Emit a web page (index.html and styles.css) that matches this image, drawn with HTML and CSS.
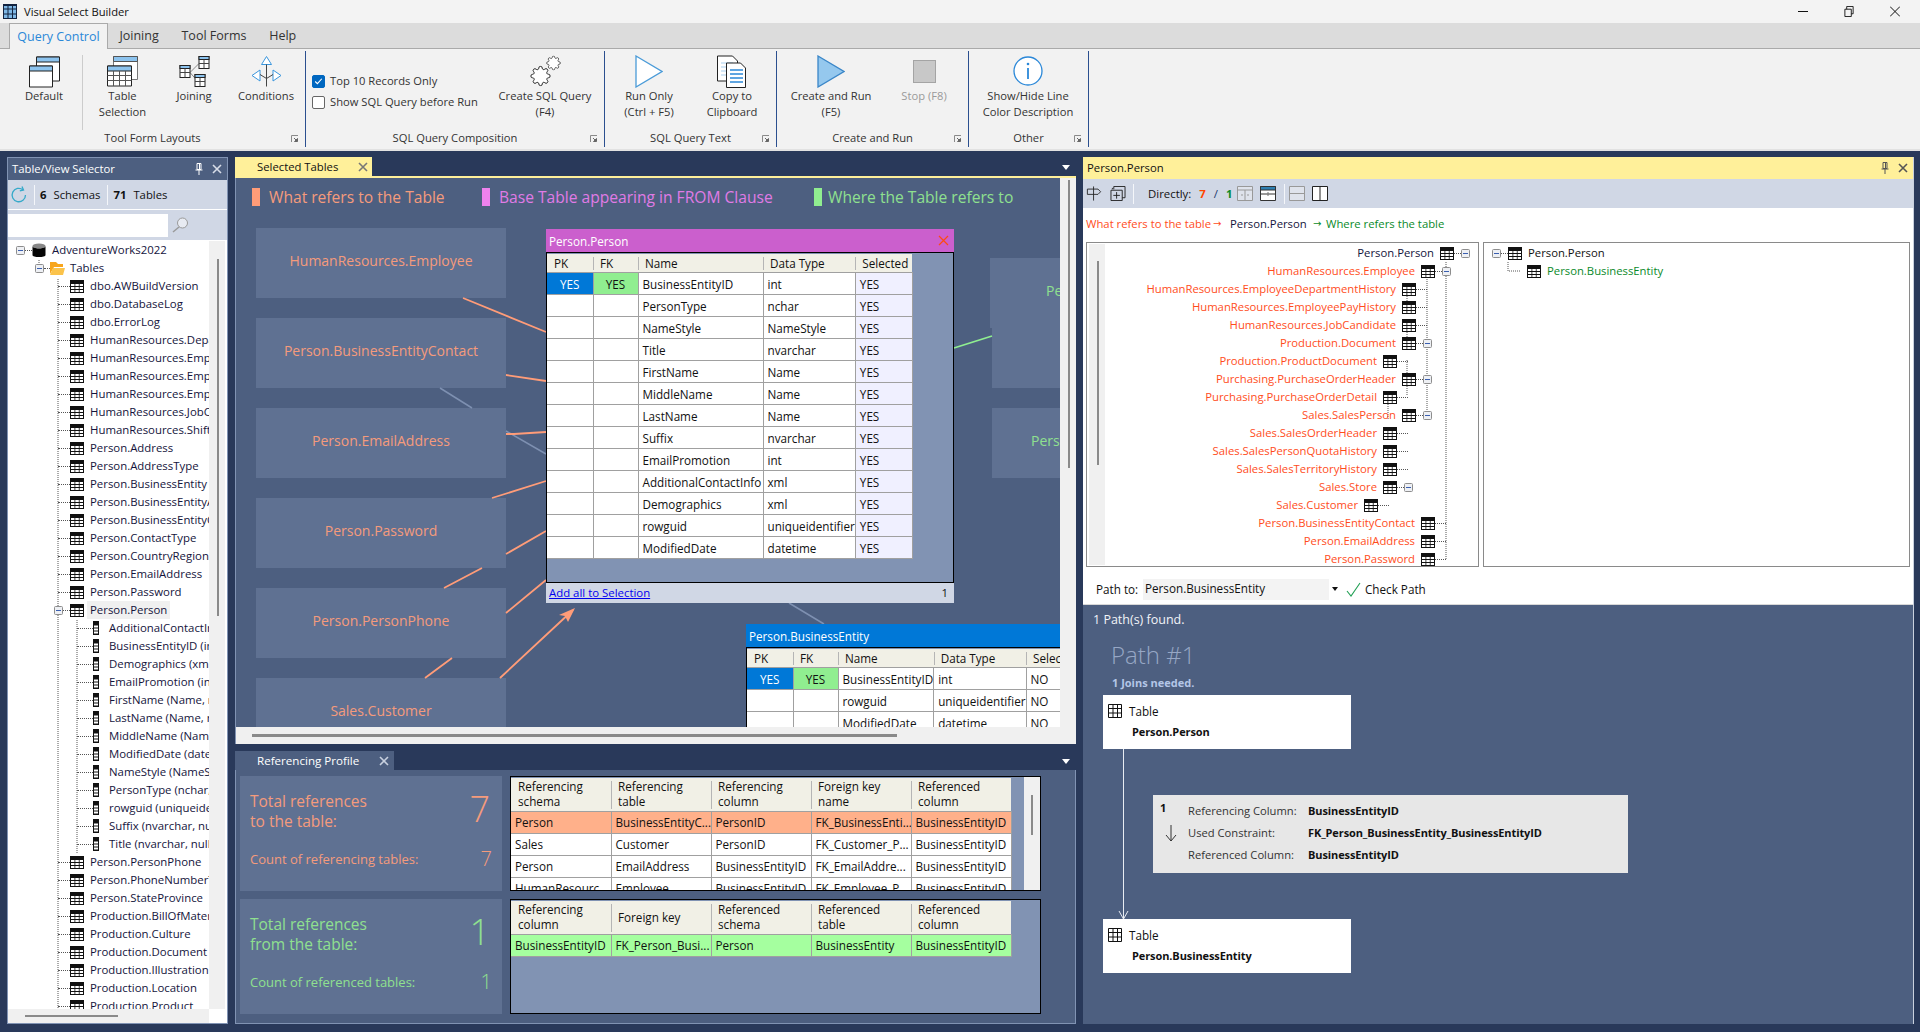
FILE: index.html
```html
<!DOCTYPE html>
<html lang="en">
<head>
<meta charset="utf-8">
<title>Visual Select Builder</title>
<link rel="stylesheet" href="styles.css">
</head>
<body>
<svg class="defs" aria-hidden="true">
  <symbol id="tbl" viewBox="0 0 14 13"><rect width="14" height="13" fill="#111"/><g fill="#fff"><rect x="1" y="4" width="3.5" height="2"/><rect x="5.3" y="4" width="3.5" height="2"/><rect x="9.6" y="4" width="3.4" height="2"/><rect x="1" y="7" width="3.5" height="2"/><rect x="5.3" y="7" width="3.5" height="2"/><rect x="9.6" y="7" width="3.4" height="2"/><rect x="1" y="10" width="3.5" height="2"/><rect x="5.3" y="10" width="3.5" height="2"/><rect x="9.6" y="10" width="3.4" height="2"/></g></symbol>
  <symbol id="col" viewBox="0 0 6 14"><rect width="6" height="14" fill="#111"/><g fill="#fff"><rect x="1" y="4.5" width="4" height="2"/><rect x="1" y="7.5" width="4" height="2"/><rect x="1" y="10.5" width="4" height="2"/></g></symbol>
  <symbol id="tblthin" viewBox="0 0 14 14"><path d="M.5.5h13v13H.5zM.5 4.5h13M.5 9h13M5 .5v13M9.5.5v13" fill="#fff" stroke="#111"/></symbol>
  <symbol id="minus" viewBox="0 0 9 9"><rect x=".5" y=".5" width="8" height="8" rx="1" fill="#eef0f4" stroke="#8d8d8d"/><path d="M2 4.5h5" stroke="#3a5fb0"/></symbol>
  <symbol id="gear" viewBox="0 0 24 24"><circle cx="12" cy="12" r="3"/><path d="M19.4 15a1.65 1.65 0 0 0 .33 1.82l.06.06a2 2 0 0 1 0 2.83 2 2 0 0 1-2.83 0l-.06-.06a1.65 1.65 0 0 0-1.82-.33 1.65 1.65 0 0 0-1 1.51V21a2 2 0 0 1-2 2 2 2 0 0 1-2-2v-.09A1.65 1.65 0 0 0 9 19.4a1.65 1.65 0 0 0-1.82.33l-.06.06a2 2 0 0 1-2.83 0 2 2 0 0 1 0-2.83l.06-.06a1.65 1.65 0 0 0 .33-1.82 1.65 1.65 0 0 0-1.51-1H3a2 2 0 0 1-2-2 2 2 0 0 1 2-2h.09A1.65 1.65 0 0 0 4.6 9a1.65 1.65 0 0 0-.33-1.82l-.06-.06a2 2 0 0 1 0-2.83 2 2 0 0 1 2.83 0l.06.06a1.65 1.65 0 0 0 1.82.33H9a1.65 1.65 0 0 0 1-1.51V3a2 2 0 0 1 2-2 2 2 0 0 1 2 2v.09a1.65 1.65 0 0 0 1 1.51 1.65 1.65 0 0 0 1.82-.33l.06-.06a2 2 0 0 1 2.83 0 2 2 0 0 1 0 2.83l-.06.06a1.65 1.65 0 0 0-.33 1.82V9a1.65 1.65 0 0 0 1.51 1H21a2 2 0 0 1 2 2 2 2 0 0 1-2 2h-.09a1.65 1.65 0 0 0-1.51 1z"/></symbol>
  <symbol id="launch" viewBox="0 0 8 8"><path d="M.5 7V.5H7" fill="none" stroke="#8a8a8a"/><path d="M3 3l3 3M6.5 3.5v3h-3z" fill="#555" stroke="#666"/></symbol>
  <symbol id="x" viewBox="0 0 10 10"><path d="M1 1l8 8M9 1L1 9" fill="none" stroke="currentColor" stroke-width="1.6"/></symbol>
  <symbol id="pin" viewBox="0 0 8 12"><path d="M2 .5h4v6H2zM.5 7h7M4 7v5M4.5 1v5" fill="none" stroke="currentColor"/></symbol>
</svg>

<header class="titlebar">
  <svg class="appicon" viewBox="0 0 14 15"><rect x=".5" y=".5" width="13" height="14" fill="#7fb8e6" stroke="#13233f"/><path d="M.5 5h13M.5 10h13M5 .5v14M9.5.5v14M.5 1.5h13" stroke="#13233f" fill="none"/></svg>
  <span class="apptitle">Visual Select Builder</span>
  <div class="winctl">
    <svg viewBox="0 0 10 10"><path d="M0 5h10" stroke="#111"/></svg>
    <svg viewBox="0 0 10 12"><path d="M.5 3.5h7v8h-7zM2.5 3.5v-3h7v8h-2" fill="none" stroke="#111"/></svg>
    <svg viewBox="0 0 10 10"><path d="M0 0l10 10M10 0L0 10" stroke="#111"/></svg>
  </div>
</header>

<nav class="menubar">
  <span class="menutab active">Query Control</span>
  <span class="menutab">Joining</span>
  <span class="menutab">Tool Forms</span>
  <span class="menutab">Help</span>
</nav>

<section class="ribbon">
  <div class="group g1">
    <div class="groupbody">
      <div class="rbtn w72">
        <svg class="ricon" width="31" height="32" viewBox="0 0 31 32"><path d="M7.5 1.5h23v24h-23z" fill="#fff" stroke="#222"/><path d="M7.5 1.5h23v5h-23z" fill="#8cc3ee" stroke="#222"/><path d="M.5 10.500h23v21H.5z" fill="#fff" stroke="#222"/><path d="M.5 10.500h23v5H.5z" fill="#8cc3ee" stroke="#222"/></svg>
        <span>Default</span>
      </div>
      <i class="rsep"></i>
      <div class="rbtn w71">
        <svg class="ricon" width="31" height="32" viewBox="0 0 31 32"><path d="M6.500 1h24v23h-24z" fill="#fff" stroke="#777"/><path d="M6.500 1h24v5h-24z" fill="#8cc3ee" stroke="#555"/><path d="M.5 10.500h24v20H.5z" fill="#fff" stroke="#222"/><path d="M.5 10.500h24v5H.5z" fill="#8cc3ee" stroke="#222"/><path d="M.5 20h24M.5 25h24M6.500 15.500v15M12.500 15.500v15M18.500 15.500v15" stroke="#555" fill="none"/></svg>
        <span>Table<br>Selection</span>
      </div>
      <div class="rbtn w72">
        <svg class="ricon" width="31" height="32" viewBox="0 0 31 32"><path d="M11 17l9-9M11 17l7 8" stroke="#888" fill="none"/><g fill="#fff" stroke="#222"><rect x="1" y="10" width="10" height="12"/><rect x="20" y="1" width="10" height="12"/><rect x="16" y="19" width="10" height="12"/></g><g fill="#8cc3ee" stroke="#222"><rect x="1" y="10" width="10" height="3"/><rect x="20" y="1" width="10" height="3"/><rect x="16" y="19" width="10" height="3"/></g><path d="M1 17h10M6 13v9M20 8h10M25 4v9M16 26h10M21 22v9" stroke="#444" fill="none"/></svg>
        <span>Joining</span>
      </div>
      <div class="rbtn w72">
        <svg class="ricon" width="31" height="32" viewBox="0 0 31 32"><path d="M15.500 1l-5 8h10zM1 20l8-5.500v11zM30 20l-8-5.500v11z" fill="#fff" stroke="#3a96dd"/><path d="M15.500 9v22M9 19l6.500 4 6.500-4" fill="none" stroke="#444"/></svg>
        <span>Conditions</span>
      </div>
    </div>
    <div class="grouplabel">Tool Form Layouts<svg class="launch"><use href="#launch"/></svg></div>
  </div>

  <div class="group g2">
    <div class="groupbody">
      <div class="checks">
        <label class="chk"><i class="box on"><svg viewBox="0 0 10 10"><path d="M2 5l2 2 4-4.500" fill="none" stroke="#fff"/></svg></i>Top 10 Records Only</label>
        <label class="chk"><i class="box"></i>Show SQL Query before Run</label>
      </div>
      <div class="rbtn w100 ml-gear">
        <svg class="ricon gears" width="32" height="32" viewBox="0 0 32 32"><use href="#gear" x="1" y="10" width="21" height="21"/><use href="#gear" x="17" y="0" width="15" height="15"/></svg>
        <span>Create SQL Query<br>(F4)</span>
      </div>
    </div>
    <div class="grouplabel">SQL Query Composition<svg class="launch"><use href="#launch"/></svg></div>
  </div>

  <div class="group g3">
    <div class="groupbody">
      <div class="rbtn w72">
        <svg class="ricon" width="28" height="33" viewBox="0 0 28 33"><path d="M1 1l26 15.500L1 32z" fill="#fff" stroke="#4a9bd8" stroke-width="1.300"/></svg>
        <span>Run Only<br>(Ctrl + F5)</span>
      </div>
      <div class="rbtn w72 ml11">
        <svg class="ricon" width="30" height="33" viewBox="0 0 30 33"><path d="M.5 1h15l5 5v20H.5z" fill="#fff" stroke="#222"/><path d="M4 8h12M4 12h10M4 16h10M4 20h10" stroke="#a9cfee"/><path d="M9.500 8h14l5 5v19.500H9.500z" fill="#fff" stroke="#222"/><path d="M13 15h13M13 19h13M13 23h13M13 27h13" stroke="#2b88d8" stroke-width="1.300"/></svg>
        <span>Copy to<br>Clipboard</span>
      </div>
    </div>
    <div class="grouplabel">SQL Query Text<svg class="launch"><use href="#launch"/></svg></div>
  </div>

  <div class="group g4">
    <div class="groupbody">
      <div class="rbtn w90">
        <svg class="ricon" width="28" height="33" viewBox="0 0 28 33"><path d="M1 1l26 15.500L1 32z" fill="#95c8ee" stroke="#3a86c8" stroke-width="1.300"/></svg>
        <span>Create and Run<br>(F5)</span>
      </div>
      <div class="rbtn w60 ml18 disabled">
        <svg class="ricon" width="23" height="33" viewBox="0 0 23 33"><rect x=".5" y="5.500" width="22" height="22" fill="#c8c8c8" stroke="#a4a4a4"/></svg>
        <span>Stop (F8)</span>
      </div>
    </div>
    <div class="grouplabel">Create and Run<svg class="launch"><use href="#launch"/></svg></div>
  </div>

  <div class="group g5">
    <div class="groupbody">
      <div class="rbtn w100">
        <svg class="ricon" width="30" height="33" viewBox="0 0 30 33"><circle cx="15" cy="16" r="14" fill="#fff" stroke="#2b88d8" stroke-width="1.300"/><path d="M15 13v11" stroke="#2b88d8" stroke-width="1.800"/><circle cx="15" cy="9" r="1.300" fill="#2b88d8"/></svg>
        <span>Show/Hide Line<br>Color Description</span>
      </div>
    </div>
    <div class="grouplabel">Other<svg class="launch"><use href="#launch"/></svg></div>
  </div>
</section>
<div class="ribbonedge"></div>

<main class="workspace">
  <aside class="selector">
    <div class="panelhead darkhead"><span>Table/View Selector</span><svg class="pin"><use href="#pin"/></svg><svg class="close"><use href="#x"/></svg></div>
    <div class="seltool">
      <svg class="refresh" viewBox="0 0 18 18"><path d="M15.500 9A6.700 6.700 0 1 1 13 3.800" fill="none" stroke="#35a9c9" stroke-width="1.300"/><path d="M12 .5l1.500 3.500-3.700.8" fill="none" stroke="#35a9c9" stroke-width="1.300"/></svg>
      <i class="tsep"></i><b>6</b><span class="tlabel">Schemas</span>
      <i class="tsep"></i><b>71</b><span class="tlabel">Tables</span>
    </div>
    <div class="selsearch"><span class="searchbox"></span><svg class="lens" viewBox="0 0 17 16"><circle cx="10.500" cy="6" r="5" fill="#e8ebf2" stroke="#9a9a9a"/><path d="M7 10l-6 5" stroke="#9a9a9a" stroke-width="1.500"/></svg></div>
    <div class="selbody">
      <div class="tree">
        <svg class="tlines" viewBox="8 240 201 768"><path d="M39 259v5M58 278v730M77 619v234" stroke="#555" stroke-dasharray="1 1" fill="none"/></svg>
        <div class="row l0"><svg class="mm"><use href="#minus"/></svg><i class="conn c7"></i><svg class="dbicon" viewBox="0 0 14 14"><ellipse cx="7" cy="3" rx="6.500" ry="2.500" fill="#888"/><path d="M.5 3v9c0 1.500 3 2 6.500 2s6.500-.5 6.500-2V3c0 1.500-3 2.500-6.500 2.500S.5 4.500.5 3z" fill="#050505"/></svg><span class="t6">AdventureWorks2022</span></div>
        <div class="row l1"><svg class="mm"><use href="#minus"/></svg><i class="conn c6"></i><svg class="folder" viewBox="0 0 15 14"><path d="M0 13V1h6l2 2h5v3H4z" fill="#f7a51c"/><path d="M0 14l3-7h12l-2 7z" fill="#fbc34a"/></svg><span class="t5">Tables</span></div>
        <div class="row l2"><i class="conn c12"></i><svg class="ti"><use href="#tbl"/></svg><span class="t6">dbo.AWBuildVersion</span></div>
        <div class="row l2"><i class="conn c12"></i><svg class="ti"><use href="#tbl"/></svg><span class="t6">dbo.DatabaseLog</span></div>
        <div class="row l2"><i class="conn c12"></i><svg class="ti"><use href="#tbl"/></svg><span class="t6">dbo.ErrorLog</span></div>
        <div class="row l2"><i class="conn c12"></i><svg class="ti"><use href="#tbl"/></svg><span class="t6">HumanResources.Department</span></div>
        <div class="row l2"><i class="conn c12"></i><svg class="ti"><use href="#tbl"/></svg><span class="t6">HumanResources.Employee</span></div>
        <div class="row l2"><i class="conn c12"></i><svg class="ti"><use href="#tbl"/></svg><span class="t6">HumanResources.EmployeeDepartmentHistory</span></div>
        <div class="row l2"><i class="conn c12"></i><svg class="ti"><use href="#tbl"/></svg><span class="t6">HumanResources.EmployeePayHistory</span></div>
        <div class="row l2"><i class="conn c12"></i><svg class="ti"><use href="#tbl"/></svg><span class="t6">HumanResources.JobCandidate</span></div>
        <div class="row l2"><i class="conn c12"></i><svg class="ti"><use href="#tbl"/></svg><span class="t6">HumanResources.Shift</span></div>
        <div class="row l2"><i class="conn c12"></i><svg class="ti"><use href="#tbl"/></svg><span class="t6">Person.Address</span></div>
        <div class="row l2"><i class="conn c12"></i><svg class="ti"><use href="#tbl"/></svg><span class="t6">Person.AddressType</span></div>
        <div class="row l2"><i class="conn c12"></i><svg class="ti"><use href="#tbl"/></svg><span class="t6">Person.BusinessEntity</span></div>
        <div class="row l2"><i class="conn c12"></i><svg class="ti"><use href="#tbl"/></svg><span class="t6">Person.BusinessEntityAddress</span></div>
        <div class="row l2"><i class="conn c12"></i><svg class="ti"><use href="#tbl"/></svg><span class="t6">Person.BusinessEntityContact</span></div>
        <div class="row l2"><i class="conn c12"></i><svg class="ti"><use href="#tbl"/></svg><span class="t6">Person.ContactType</span></div>
        <div class="row l2"><i class="conn c12"></i><svg class="ti"><use href="#tbl"/></svg><span class="t6">Person.CountryRegion</span></div>
        <div class="row l2"><i class="conn c12"></i><svg class="ti"><use href="#tbl"/></svg><span class="t6">Person.EmailAddress</span></div>
        <div class="row l2"><i class="conn c12"></i><svg class="ti"><use href="#tbl"/></svg><span class="t6">Person.Password</span></div>
        <div class="row l2b"><svg class="mm"><use href="#minus"/></svg><i class="conn c7"></i><svg class="ti"><use href="#tbl"/></svg><span class="t6 sel">Person.Person</span></div>
        <div class="row l3"><i class="conn c15"></i><svg class="ci"><use href="#col"/></svg><span class="t10">AdditionalContactInfo (xml, null)</span></div>
        <div class="row l3"><i class="conn c15"></i><svg class="ci"><use href="#col"/></svg><span class="t10">BusinessEntityID (int, not null)</span></div>
        <div class="row l3"><i class="conn c15"></i><svg class="ci"><use href="#col"/></svg><span class="t10">Demographics (xml, null)</span></div>
        <div class="row l3"><i class="conn c15"></i><svg class="ci"><use href="#col"/></svg><span class="t10">EmailPromotion (int, not null)</span></div>
        <div class="row l3"><i class="conn c15"></i><svg class="ci"><use href="#col"/></svg><span class="t10">FirstName (Name, not null)</span></div>
        <div class="row l3"><i class="conn c15"></i><svg class="ci"><use href="#col"/></svg><span class="t10">LastName (Name, not null)</span></div>
        <div class="row l3"><i class="conn c15"></i><svg class="ci"><use href="#col"/></svg><span class="t10">MiddleName (Name, null)</span></div>
        <div class="row l3"><i class="conn c15"></i><svg class="ci"><use href="#col"/></svg><span class="t10">ModifiedDate (datetime, not null)</span></div>
        <div class="row l3"><i class="conn c15"></i><svg class="ci"><use href="#col"/></svg><span class="t10">NameStyle (NameStyle, not null)</span></div>
        <div class="row l3"><i class="conn c15"></i><svg class="ci"><use href="#col"/></svg><span class="t10">PersonType (nchar, not null)</span></div>
        <div class="row l3"><i class="conn c15"></i><svg class="ci"><use href="#col"/></svg><span class="t10">rowguid (uniqueidentifier, not null)</span></div>
        <div class="row l3"><i class="conn c15"></i><svg class="ci"><use href="#col"/></svg><span class="t10">Suffix (nvarchar, null)</span></div>
        <div class="row l3"><i class="conn c15"></i><svg class="ci"><use href="#col"/></svg><span class="t10">Title (nvarchar, null)</span></div>
        <div class="row l2"><i class="conn c12"></i><svg class="ti"><use href="#tbl"/></svg><span class="t6">Person.PersonPhone</span></div>
        <div class="row l2"><i class="conn c12"></i><svg class="ti"><use href="#tbl"/></svg><span class="t6">Person.PhoneNumberType</span></div>
        <div class="row l2"><i class="conn c12"></i><svg class="ti"><use href="#tbl"/></svg><span class="t6">Person.StateProvince</span></div>
        <div class="row l2"><i class="conn c12"></i><svg class="ti"><use href="#tbl"/></svg><span class="t6">Production.BillOfMaterials</span></div>
        <div class="row l2"><i class="conn c12"></i><svg class="ti"><use href="#tbl"/></svg><span class="t6">Production.Culture</span></div>
        <div class="row l2"><i class="conn c12"></i><svg class="ti"><use href="#tbl"/></svg><span class="t6">Production.Document</span></div>
        <div class="row l2"><i class="conn c12"></i><svg class="ti"><use href="#tbl"/></svg><span class="t6">Production.Illustration</span></div>
        <div class="row l2"><i class="conn c12"></i><svg class="ti"><use href="#tbl"/></svg><span class="t6">Production.Location</span></div>
        <div class="row l2"><i class="conn c12"></i><svg class="ti"><use href="#tbl"/></svg><span class="t6">Production.Product</span></div>
      </div>
      <div class="vscroll selv"><i class="thumbv"></i></div>
    </div>
    <div class="hscroll selh"><i class="thumbh"></i></div>
  </aside>

  <section class="center">
    <div class="pane toppane">
      <div class="tabstrip yellowline">
        <div class="doctab yellow"><span>Selected Tables</span><svg class="close"><use href="#x"/></svg></div>
        <svg class="tabarrow" viewBox="0 0 8 5"><path d="M0 0h8L4 5z" fill="#fff"/></svg>
      </div>
      <div class="panebody">
        <div class="canvasrow">
          <div class="canvas">
            <div class="legend">
              <div class="lg orange"><i></i>What refers to the Table</div>
              <div class="lg pink"><i></i>Base Table appearing in FROM Clause</div>
              <div class="lg green"><i></i>Where the Table refers to</div>
            </div>
            <div class="node n1">HumanResources.Employee</div>
            <div class="node n2">Person.BusinessEntityContact</div>
            <div class="node n3">Person.EmailAddress</div>
            <div class="node n4">Person.Password</div>
            <div class="node n5">Person.PersonPhone</div>
            <div class="node n6">Sales.Customer</div>
            <div class="node r2"></div>
            <div class="node r1 gtext">Person.BusinessEntity</div>
            <div class="node r3 gtext">Person.BusinessEntityAddress</div>
            <svg class="lines" viewBox="236 178 823 549">
              <g stroke="#7e90b1" stroke-width="1.500" fill="none"><path d="M440 388l32 20M506 431l40 23M789 603l35 21"/></g>
              <g stroke="#ff9c78" stroke-width="1.800" fill="none"><path d="M463 298l83 34M506 375l40 6M506 434l8 0 32-2M492 498l54-17M506 554l40-23M444 588l38-20M506 613l40-33M425 678l27-20M500 678l73-68"/></g>
              <path d="M575 608l-7 14-3-6-6-1z" fill="#ff9c78"/>
              <path d="M954 348l38-12" stroke="#90ee90" stroke-width="1.800" fill="none"/>
            </svg>
            <div class="tablewin w1">
              <div class="wintitle magenta"><span>Person.Person</span><svg class="winx" viewBox="0 0 11 11"><path d="M1 1l9 9M10 1l-9 9" stroke="#ff4a10" stroke-width="1.200" fill="none"/></svg></div>
              <div class="winbody">
                <table class="grid colsA">
                  <colgroup><col class="c-pk"><col class="c-fk"><col class="c-name"><col class="c-type"><col class="c-sel"></colgroup>
                  <thead><tr><th>PK</th><th>FK</th><th>Name</th><th>Data Type</th><th>Selected</th></tr></thead>
                  <tbody>
                    <tr><td class="pk">YES</td><td class="fk">YES</td><td>BusinessEntityID</td><td>int</td><td class="s">YES</td></tr>
                    <tr><td></td><td></td><td>PersonType</td><td>nchar</td><td class="s">YES</td></tr>
                    <tr><td></td><td></td><td>NameStyle</td><td>NameStyle</td><td class="s">YES</td></tr>
                    <tr><td></td><td></td><td>Title</td><td>nvarchar</td><td class="s">YES</td></tr>
                    <tr><td></td><td></td><td>FirstName</td><td>Name</td><td class="s">YES</td></tr>
                    <tr><td></td><td></td><td>MiddleName</td><td>Name</td><td class="s">YES</td></tr>
                    <tr><td></td><td></td><td>LastName</td><td>Name</td><td class="s">YES</td></tr>
                    <tr><td></td><td></td><td>Suffix</td><td>nvarchar</td><td class="s">YES</td></tr>
                    <tr><td></td><td></td><td>EmailPromotion</td><td>int</td><td class="s">YES</td></tr>
                    <tr><td></td><td></td><td>AdditionalContactInfo</td><td>xml</td><td class="s">YES</td></tr>
                    <tr><td></td><td></td><td>Demographics</td><td>xml</td><td class="s">YES</td></tr>
                    <tr><td></td><td></td><td>rowguid</td><td>uniqueidentifier</td><td class="s">YES</td></tr>
                    <tr><td></td><td></td><td>ModifiedDate</td><td>datetime</td><td class="s">YES</td></tr>
                  </tbody>
                </table>
              </div>
              <div class="winstatus"><a href="#">Add all to Selection</a><span>1</span></div>
            </div>
            <div class="tablewin w2">
              <div class="wintitle blue"><span>Person.BusinessEntity</span></div>
              <div class="winbody">
                <table class="grid colsA">
                  <colgroup><col class="c-pk"><col class="c-fk"><col class="c-name2"><col class="c-type"><col class="c-sel"></colgroup>
                  <thead><tr><th>PK</th><th>FK</th><th>Name</th><th>Data Type</th><th>Selected</th></tr></thead>
                  <tbody>
                    <tr><td class="pk">YES</td><td class="fk">YES</td><td>BusinessEntityID</td><td>int</td><td>NO</td></tr>
                    <tr><td></td><td></td><td>rowguid</td><td>uniqueidentifier</td><td>NO</td></tr>
                    <tr><td></td><td></td><td>ModifiedDate</td><td>datetime</td><td>NO</td></tr>
                  </tbody>
                </table>
              </div>
            </div>
          </div>
          <div class="vscroll canv"><i class="thumbv"></i></div>
        </div>
        <div class="hscroll canh"><i class="thumbh"></i></div>
      </div>
    </div>

    <div class="pane botpane">
      <div class="tabstrip">
        <div class="doctab slate"><span>Referencing Profile</span><svg class="close"><use href="#x"/></svg></div>
        <svg class="tabarrow" viewBox="0 0 8 5"><path d="M0 0h8L4 5z" fill="#fff"/></svg>
      </div>
      <div class="profile">
        <div class="card orange-t">
          <div class="cardtop"><div class="bigl">Total references<br>to the table:</div><div class="bign">7</div></div>
          <div class="cardsub"><span>Count of referencing tables:</span><span class="smn">7</span></div>
        </div>
        <div class="gridbox scrolled">
          <div class="clipgrid">
            <table class="grid colsB">
              <thead><tr><th>Referencing<br>schema</th><th>Referencing<br>table</th><th>Referencing<br>column</th><th>Foreign key<br>name</th><th>Referenced<br>column</th></tr></thead>
              <tbody>
                <tr class="or"><td>Person</td><td>BusinessEntityC...</td><td>PersonID</td><td>FK_BusinessEnti...</td><td>BusinessEntityID</td></tr>
                <tr><td>Sales</td><td>Customer</td><td>PersonID</td><td>FK_Customer_P...</td><td>BusinessEntityID</td></tr>
                <tr><td>Person</td><td>EmailAddress</td><td>BusinessEntityID</td><td>FK_EmailAddre...</td><td>BusinessEntityID</td></tr>
                <tr><td>HumanResourc</td><td>Employee</td><td>BusinessEntityID</td><td>FK_Employee_P...</td><td>BusinessEntityID</td></tr>
              </tbody>
            </table>
          </div>
          <div class="vscroll gridv"><i class="thumbv"></i></div>
        </div>
        <div class="card green-t">
          <div class="cardtop"><div class="bigl">Total references<br>from the table:</div><div class="bign">1</div></div>
          <div class="cardsub"><span>Count of referenced tables:</span><span class="smn">1</span></div>
        </div>
        <div class="gridbox">
          <div class="clipgrid">
            <table class="grid colsB">
              <thead><tr><th>Referencing<br>column</th><th>Foreign key</th><th>Referenced<br>schema</th><th>Referenced<br>table</th><th>Referenced<br>column</th></tr></thead>
              <tbody>
                <tr class="gr"><td>BusinessEntityID</td><td>FK_Person_Busi...</td><td>Person</td><td>BusinessEntity</td><td>BusinessEntityID</td></tr>
              </tbody>
            </table>
          </div>
        </div>
      </div>
    </div>
  </section>

  <section class="details">
    <div class="panelhead yellowhead"><span>Person.Person</span><svg class="pin"><use href="#pin"/></svg><svg class="close"><use href="#x"/></svg></div>
    <div class="dettool">
      <svg class="ti16" viewBox="0 0 17 17"><path d="M8 .5v16M1 3.500h12l3 3-3 3H1z" fill="none" stroke="#222"/></svg>
      <svg class="ti16 ml8" viewBox="0 0 16 16"><path d="M3.500 3.500v-3h12v12h-3M2 3.500V2M.5 4.500h12v11H.5zM6.500 6.500v7M3 10h7" fill="none" stroke="#222"/></svg>
      <i class="tsep ts2"></i>
      <span class="dirlabel">Directly:</span><b class="red">7</b><b class="slash">/</b><b class="grn">1</b>
      <svg class="ti16 mlA" viewBox="0 0 16 15"><path d="M.5.5h15v14H.5zM.5 4h15M8 4v10.500" fill="#dfe3ec" stroke="#999"/><path d="M5 8v2M11 8v2" stroke="#999"/></svg>
      <svg class="ti16 ml7" viewBox="0 0 16 15"><path d="M.5.5h15v14H.5z" fill="#fff" stroke="#333"/><path d="M.5.5h15v3.500H.5z" fill="#2f7fb0" stroke="#333"/><path d="M.5 8h15" stroke="#333"/><path d="M8 6v4" stroke="#777"/></svg>
      <i class="tsep ts3"></i>
      <svg class="ti16" viewBox="0 0 16 15"><path d="M.5.5h15v14H.5zM.5 7.500h15" fill="#dfe3ec" stroke="#999"/></svg>
      <svg class="ti16 ml7" viewBox="0 0 16 15"><path d="M.5.5h15v14H.5z" fill="#fff" stroke="#222"/><path d="M8 .5v14" stroke="#222"/></svg>
    </div>
    <div class="caption">
      <span class="c-red">What refers to the table</span><span class="c-arrow ar1">→</span><span class="c-main">Person.Person</span><span class="c-arrow ar2">→</span><span class="c-grn">Where refers the table</span>
    </div>
    <div class="treepair">
      <div class="mirror">
        <div class="mirrorscroll"><i class="thumbv"></i></div>
        <div class="mirrorrows">
          <svg class="mlines" viewBox="1106 243 372 323"><path d="M1447 262v297M1428 279v136M1408 288v18M1408 324v18M1408 360v36M1389 402v18" stroke="#555" stroke-dasharray="1 1" fill="none"/></svg>
          <div class="rr p0"><span class="blk">Person.Person</span><svg class="ti"><use href="#tbl"/></svg><i class="conn c7"></i><svg class="mm"><use href="#minus"/></svg></div>
          <div class="rr p1"><span>HumanResources.Employee</span><svg class="ti"><use href="#tbl"/></svg><i class="conn c7"></i><svg class="mm"><use href="#minus"/></svg></div>
          <div class="rr p2"><span>HumanResources.EmployeeDepartmentHistory</span><svg class="ti"><use href="#tbl"/></svg><i class="conn c11"></i><i class="gap5"></i></div>
          <div class="rr p2"><span>HumanResources.EmployeePayHistory</span><svg class="ti"><use href="#tbl"/></svg><i class="conn c11"></i><i class="gap5"></i></div>
          <div class="rr p2"><span>HumanResources.JobCandidate</span><svg class="ti"><use href="#tbl"/></svg><i class="conn c11"></i><i class="gap5"></i></div>
          <div class="rr p2"><span>Production.Document</span><svg class="ti"><use href="#tbl"/></svg><i class="conn c7"></i><svg class="mm"><use href="#minus"/></svg></div>
          <div class="rr p3"><span>Production.ProductDocument</span><svg class="ti"><use href="#tbl"/></svg><i class="conn c11"></i><i class="gap5"></i></div>
          <div class="rr p2"><span>Purchasing.PurchaseOrderHeader</span><svg class="ti"><use href="#tbl"/></svg><i class="conn c7"></i><svg class="mm"><use href="#minus"/></svg></div>
          <div class="rr p3"><span>Purchasing.PurchaseOrderDetail</span><svg class="ti"><use href="#tbl"/></svg><i class="conn c11"></i><i class="gap5"></i></div>
          <div class="rr p2"><span>Sales.SalesPerson</span><svg class="ti"><use href="#tbl"/></svg><i class="conn c7"></i><svg class="mm"><use href="#minus"/></svg></div>
          <div class="rr p3"><span>Sales.SalesOrderHeader</span><svg class="ti"><use href="#tbl"/></svg><i class="conn c11"></i><i class="gap5"></i></div>
          <div class="rr p3"><span>Sales.SalesPersonQuotaHistory</span><svg class="ti"><use href="#tbl"/></svg><i class="conn c11"></i><i class="gap5"></i></div>
          <div class="rr p3"><span>Sales.SalesTerritoryHistory</span><svg class="ti"><use href="#tbl"/></svg><i class="conn c11"></i><i class="gap5"></i></div>
          <div class="rr p3"><span>Sales.Store</span><svg class="ti"><use href="#tbl"/></svg><i class="conn c7"></i><svg class="mm"><use href="#minus"/></svg></div>
          <div class="rr p4"><span>Sales.Customer</span><svg class="ti"><use href="#tbl"/></svg><i class="conn c11"></i><i class="gap5"></i></div>
          <div class="rr p1"><span>Person.BusinessEntityContact</span><svg class="ti"><use href="#tbl"/></svg><i class="conn c11"></i><i class="gap5"></i></div>
          <div class="rr p1"><span>Person.EmailAddress</span><svg class="ti"><use href="#tbl"/></svg><i class="conn c11"></i><i class="gap5"></i></div>
          <div class="rr p1"><span>Person.Password</span><svg class="ti"><use href="#tbl"/></svg><i class="conn c11"></i><i class="gap5"></i></div>
        </div>
      </div>
      <div class="forward">
        <svg class="flines" viewBox="0 0 40 40"><path d="M16 19v9h13" stroke="#555" stroke-dasharray="1 1" fill="none"/></svg>
        <div class="fr f0"><svg class="mm"><use href="#minus"/></svg><i class="conn c7"></i><svg class="ti"><use href="#tbl"/></svg><span>Person.Person</span></div>
        <div class="fr f1"><svg class="ti"><use href="#tbl"/></svg><span class="frg">Person.BusinessEntity</span></div>
      </div>
    </div>
    <div class="pathbar">
      <span class="pathlbl">Path to:</span>
      <span class="pathinput">Person.BusinessEntity</span>
      <svg class="dd" viewBox="0 0 6 4"><path d="M0 0h6L3 4z" fill="#111"/></svg>
      <svg class="check" viewBox="0 0 15 15"><path d="M1 9l4 5L14 1" fill="none" stroke="#22a055" stroke-width="1.100"/></svg>
      <span class="pathcheck">Check Path</span>
    </div>
    <div class="pathpane">
      <div class="found">1 Path(s) found.</div>
      <div class="pathtitle">Path #1</div>
      <div class="joins">1 Joins needed.</div>
      <div class="tcard"><div class="tcardtop"><svg class="thin"><use href="#tblthin"/></svg><span>Table</span></div><b>Person.Person</b></div>
      <div class="link">
        <svg class="linkarrow" viewBox="0 0 11 170"><path d="M5.500 0v170M1 162l4.500 8 4.500-8" fill="none" stroke="#e8ecf2"/></svg>
        <div class="joinbox">
          <b class="jn">1</b><span class="jl">Referencing Column:</span><b>BusinessEntityID</b>
          <svg class="jarrow" viewBox="0 0 12 17"><path d="M6 0v16M1 10l5 6 5-6" fill="none" stroke="#333"/></svg><span class="jl">Used Constraint:</span><b>FK_Person_BusinessEntity_BusinessEntityID</b>
          <i></i><span class="jl">Referenced Column:</span><b>BusinessEntityID</b>
        </div>
      </div>
      <div class="tcard"><div class="tcardtop"><svg class="thin"><use href="#tblthin"/></svg><span>Table</span></div><b>Person.BusinessEntity</b></div>
    </div>
  </section>
</main>
</body>
</html>
```

FILE: styles.css
```css
:root { --dark:#29395a; --slate:#4d5f80; --node:#5f7192; --mid:#8193b3; --pale:#d0d7e5; --yellow:#fff09a; --scroll:#f0f0f0; }
* { box-sizing: border-box; }
html, body { margin: 0; height: 100%; }
body { width: 1920px; height: 1032px; overflow: hidden; background: var(--dark); font: 11.3px/16px "Open Sans", "Liberation Sans", sans-serif; color: #111; display: flex; flex-direction: column; }
.defs { display: none; }
svg { display: block; flex: none; }
i { display: block; flex: none; font-style: normal; }

.titlebar { height: 23px; background: #f3f3f3; display: flex; align-items: center; padding-left: 3px; flex: none; }
.appicon { width: 14px; height: 15px; margin-right: 7px; }
.apptitle { font-size: 11.2px; }
.winctl { margin-left: auto; display: flex; align-items: center; gap: 36px; padding-right: 20px; }
.winctl svg { width: 10px; height: 11px; }

.menubar { height: 26px; background: #dcdcdc; border-bottom: 1px solid #aaa; display: flex; align-items: flex-end; padding-left: 9px; flex: none; font-size: 12.5px; }
.menutab { height: 25px; line-height: 25px; padding: 0 11.4px; color: #333; }
.menutab.active { width: 99px; padding: 0; text-align: center; background: #f2f2f2; border: 1px solid #aaa; border-bottom: 0; color: #2b88d8; margin-bottom: -1px; height: 26px; }

.ribbon { height: 100px; background: #f2f2f2; display: flex; padding-top: 2px; flex: none; font-size: 11.2px; }
.ribbonedge { height: 2px; background: #e2e2e2; flex: none; }
.group { height: 96px; border-right: 1px solid #2b4f8f; display: flex; flex-direction: column; flex: none; }
.g1 { width: 306px; padding-left: 8px; }
.g2 { width: 299px; padding-left: 6px; }
.g3 { width: 172px; padding-left: 8px; }
.g4 { width: 192px; padding-left: 9px; }
.g5 { width: 120px; padding-left: 9px; }
.groupbody { flex: 1; display: flex; }
.grouplabel { height: 17px; line-height: 16px; text-align: center; position: relative; color: #333; }
.g1 .grouplabel { margin-left: -8px; }
.g2 .grouplabel { margin-left: -6px; }
.g3 .grouplabel { margin-left: -8px; }
.g4 .grouplabel { margin-left: -9px; }
.g5 .grouplabel { margin-left: -9px; }
.launch { position: absolute; right: 6px; top: 5px; width: 8px; height: 8px; }
.rbtn { display: flex; flex-direction: column; align-items: center; text-align: center; padding-top: 4px; color: #333; flex: none; }
.rbtn span { display: block; white-space: nowrap; }
.ricon { height: 33px; }
.w60 { width: 60px; } .w71 { width: 71px; } .w72 { width: 72px; } .w90 { width: 90px; } .w100 { width: 100px; }
.ml11 { margin-left: 11px; } .ml18 { margin-left: 18px; }
.ml-gear { margin-left: auto; margin-right: 9px; }
.gears { fill: #fff; stroke: #222; stroke-width: 1.100; }
.rsep { width: 1px; height: 75px; margin: 4px 4px 0 2px; background: #ccc; }
.disabled { color: #9a9a9a; }
.checks { display: flex; flex-direction: column; gap: 5px; padding-top: 22px; }
.chk { display: flex; align-items: center; gap: 5px; color: #333; white-space: nowrap; }
.box { width: 13px; height: 13px; border: 1px solid #666; border-radius: 2px; background: #fff; }
.box.on { background: #0067c0; border-color: #0067c0; }
.box svg { width: 11px; height: 11px; }

.workspace { flex: 1; display: flex; gap: 7px; padding: 6px 6px 8px 7px; min-height: 0; }

/* Left selector */
.selector { width: 221px; display: flex; flex-direction: column; border: 1px solid #8193b3; background: #fff; }
.panelhead { height: 22px; display: flex; align-items: center; padding-left: 4px; flex: none; }
.darkhead { background: var(--slate); color: #fff; }
.yellowhead { background: var(--yellow); color: #111; height: 22px; }
.panelhead span { flex: 1; }
.pin { width: 8px; height: 12px; color: #fff; margin-right: 9px; }
.panelhead .close { width: 10px; height: 10px; color: #d8dde8; margin-right: 5px; }
.yellowhead .pin { color: #555; }
.yellowhead .close { color: #555; }
.seltool { height: 29px; background: var(--pale); display: flex; align-items: center; padding-left: 2px; font-size: 11.3px; flex: none; }
.seltool b { margin-right: 7px; margin-left: 5px; }
.tlabel { margin-right: 1px; }
.refresh { width: 18px; height: 18px; }
.tsep { width: 1px; height: 20px; background: #f4f6fa; margin-left: 6px; }
.selsearch { height: 30px; background: var(--pale); display: flex; align-items: center; margin-top: 1px; flex: none; }
.searchbox { width: 160px; height: 23px; background: #fff; }
.lens { width: 17px; height: 16px; margin-left: 4px; }
.selbody { flex: 1; display: flex; min-height: 0; background: #fff; padding-top: 1px; }
.tree { width: 201px; position: relative; overflow: hidden; }
.tlines { position: absolute; left: 0; top: 0; width: 201px; height: 768px; }
.row { height: 18px; display: flex; align-items: center; white-space: nowrap; color: #14143c; font-size: 11.4px; position: relative; }
.l0 { padding-left: 8px; } .l1 { padding-left: 27px; } .l2 { padding-left: 50px; } .l2b { padding-left: 46px; } .l3 { padding-left: 69px; }
.mm { width: 9px; height: 9px; }
.conn { height: 0; border-bottom: 1px dotted #555; }
.c6 { width: 6px; } .c7 { width: 7px; } .c11 { width: 11px; } .c12 { width: 12px; } .c15 { width: 16px; }
.gap5 { width: 5px; }
.ti { width: 14px; height: 13px; }
.ci { width: 6px; height: 14px; }
.dbicon { width: 14px; height: 14px; }
.folder { width: 15px; height: 14px; }
.t5 { margin-left: 5px; } .t6 { margin-left: 6px; } .t10 { margin-left: 10px; }
.sel { background: #f0f0f0; padding: 0 3px; margin-left: 3px; line-height: 18px; }
.vscroll { background: var(--scroll); position: relative; flex: none; }
.thumbv { position: absolute; width: 2px; background: #8a8a8a; }
.hscroll { background: var(--scroll); position: relative; flex: none; }
.thumbh { position: absolute; height: 2px; background: #8a8a8a; }
.selv { width: 16px; }
.selv .thumbv { left: 8px; top: 18px; height: 357px; }
.selh { height: 14px; width: 201px; }
.selh .thumbh { left: 17px; top: 6px; width: 93px; }

/* Center */
.center { width: 841px; display: flex; flex-direction: column; gap: 7px; flex: none; }
.pane { display: flex; flex-direction: column; }
.toppane { height: 587px; flex: none; }
.botpane { flex: 1; min-height: 0; }
.tabstrip { height: 19px; display: flex; position: relative; flex: none; }
.yellowline { height: 21px; border-bottom: 2px solid var(--yellow); }
.doctab { display: flex; align-items: center; height: 19px; color: #111; }
.doctab .close { width: 10px; height: 10px; margin-left: auto; color: #777; }
.yellow { width: 137px; background: var(--yellow); padding: 0 4px 0 22px; }
.slate { width: 159px; background: var(--slate); color: #fff; padding: 0 5px 0 22px; font-size: 11.6px; }
.slate .close { color: #c8d0de; }
.tabarrow { position: absolute; right: 6px; top: 8px; width: 8px; height: 5px; }
.panebody { flex: 1; display: flex; flex-direction: column; border-left: 1px solid var(--mid); min-height: 0; }
.canvasrow { flex: 1; display: flex; min-height: 0; }
.canvas { flex: 1; position: relative; overflow: hidden; background: var(--slate); }
.canv { width: 16px; }
.canv .thumbv { left: 8px; top: 2px; height: 288px; }
.canh { height: 17px; }
.canh .thumbh { left: 16px; top: 7px; width: 645px; height: 3px; }
.legend { display: grid; grid-template-columns: 230px 332px auto; padding: 9px 0 0 16px; font-size: 15.6px; line-height: 20px; }
.lg { display: flex; align-items: center; gap: 9px; white-space: nowrap; }
.lg i { width: 8px; height: 18px; }
.orange { color: #f59b7c; } .orange i { background: #ff9c78; }
.pink { color: #e07be6; } .pink i { background: #ee82ee; }
.green { color: #8fe08f; gap: 6px; } .green i { background: #90ee90; }
.node { position: absolute; width: 250px; height: 70px; background: var(--node); color: #f59b7c; font-size: 14px; display: flex; align-items: center; justify-content: center; padding-bottom: 4px; }
.n1 { left: 20px; top: 50px; } .n2 { left: 20px; top: 140px; } .n3 { left: 20px; top: 230px; } .n4 { left: 20px; top: 320px; } .n5 { left: 20px; top: 410px; } .n6 { left: 20px; top: 500px; }
.r1 { left: 754px; top: 80px; padding-left: 56px; } .r2 { left: 756px; top: 140px; } .r3 { left: 756px; top: 230px; padding-left: 39px; }
.gtext { color: #8fe08f; justify-content: flex-start; }
.lines { position: absolute; left: 0; top: 0; width: 823px; height: 549px; }
.tablewin { position: absolute; width: 408px; font-size: 11.7px; }
.w1 { left: 310px; top: 51px; height: 374px; display: flex; flex-direction: column; }
.w2 { left: 510px; top: 446px; }
.wintitle { height: 23px; display: flex; align-items: center; justify-content: space-between; padding: 0 5px 0 3px; color: #fff; }
.magenta { background: #cb5fcd; }
.blue { background: #0078d7; }
.winx { width: 11px; height: 11px; }
.winbody { flex: 1; background: var(--mid); border: 1px solid #000; padding-top: 1px; }
.w2 .winbody { height: 120px; }
.winstatus { height: 20px; background: var(--pale); display: flex; justify-content: space-between; align-items: center; padding: 0 6px 0 3px; font-size: 11.4px; }
.winstatus a { color: #0000ee; text-decoration: underline; }
.grid { border-collapse: collapse; table-layout: fixed; font-size: 11.7px; line-height: 16px; }
.colsA th { height: 18px; padding-top: 1px; }
.colsA td { height: 22px; padding-top: 0; padding-bottom: 0; }
.grid th { background: #f1f0e6; font-weight: 400; text-align: left; padding-left: 7px; padding-right: 3px; position: relative; white-space: nowrap; }
.grid th + th::before { content: ""; position: absolute; left: 0; top: 3px; bottom: 2px; width: 1px; background: #b5b5b5; }
.grid td { background: #fff; border: 1px solid #a0a0a0; padding-left: 4px; padding-right: 0; white-space: nowrap; overflow: hidden; }
.grid td:first-child { border-left: 0; }
.c-pk { width: 46px; } .c-fk { width: 45px; } .c-name { width: 125px; } .c-name2 { width: 94px; } .c-type { width: 92px; } .c-sel { width: 57px; }
.grid td.pk { background: #0078d7; color: #fff; text-align: center; padding-left: 0; }
.grid td.fk { background: #90ee90; text-align: center; padding-left: 0; }
.grid td.s { background: #f0f0ff; }
.profile { flex: 1; background: var(--slate); border: 1px solid #8193b3; border-top: 0; display: grid; grid-template-columns: 262px 531px; grid-template-rows: 115px 115px; gap: 8px; padding: 6px 0 0 4px; align-content: start; }
.card { background: var(--node); padding: 15px 10px 0; }
.orange-t { color: #f59b7c; }
.green-t { color: #8fe08f; }
.cardtop { display: flex; justify-content: space-between; align-items: center; padding-right: 2px; }
.bigl { font-size: 15.5px; line-height: 20px; }
.bign { font-size: 36px; line-height: 40px; font-weight: 300; margin-top: -5px; }
.cardsub { display: flex; justify-content: space-between; align-items: center; margin-top: 18px; font-size: 13px; line-height: 20px; }
.smn { font-size: 20px; font-weight: 300; }
.gridbox { border: 1px solid #000; background: var(--mid); display: flex; overflow: hidden; }
.clipgrid { flex: 1; overflow: hidden; padding-top: 1px; }
.colsB { width: 500px; }
.colsB th { width: 100px; height: 33px; line-height: 15px; padding-top: 1px; }
.colsB td { height: 22px; padding-left: 4px; padding-top: 1px; }
.or td { background: #ffb08a; }
.gr td { background: #a5ff9f; }
.gridv { width: 16px; }
.gridv .thumbv { left: 7px; top: 18px; height: 40px; }

/* Right */
.details { flex: 1; display: flex; flex-direction: column; background: #fff; border-right: 1px solid #c8d0de; min-width: 0; }
.dettool { height: 29px; background: var(--pale); display: flex; align-items: center; padding-left: 3px; font-size: 11.4px; flex: none; }
.ti16 { width: 16px; height: 15px; }
.ml8 { margin-left: 8px; } .ml7 { margin-left: 7px; }
.ts2 { margin-left: 7px; margin-right: 14px; }
.ts3 { margin-left: 8px; margin-right: 4px; }
.dirlabel { margin-right: 8px; }
.red { color: #ff4500; margin-right: 8px; }
.slash { color: #1c3a6b; margin-right: 8px; font-weight: 400; }
.grn { color: #0a8a2a; }
.mlA { margin-left: 4px; }
.caption { height: 30px; padding: 8px 0 0 3px; display: flex; white-space: nowrap; flex: none; font-size: 11.3px; }
.c-red { color: #ff4d1c; width: 127px; flex: none; }
.c-main { color: #14143c; width: 83px; flex: none; }
.c-grn { color: #0a8a2a; }
.c-arrow { font: 10px/16px "DejaVu Sans", sans-serif; flex: none; }
.ar1 { color: #ff4d1c; width: 17px; }
.ar2 { color: #0a8a2a; width: 13px; }
.treepair { height: 329px; display: flex; gap: 4px; padding: 4px 3px 0; flex: none; }
.mirror { width: 393px; border: 1px solid #8a8a8a; display: flex; }
.mirrorscroll { width: 16px; margin: 1px 0 1px 2px; background: var(--scroll); position: relative; flex: none; }
.mirrorscroll .thumbv { left: 8px; top: 17px; height: 204px; }
.mirrorrows { flex: 1; position: relative; padding-top: 1px; }
.mlines { position: absolute; left: 0; top: 0; width: 372px; height: 323px; }
.rr { height: 18px; display: flex; align-items: center; justify-content: flex-end; color: #ff4d1c; white-space: nowrap; font-size: 11.3px; position: relative; }
.rr span { margin-right: 6px; }
.rr .blk { color: #14143c; }
.p0 { padding-right: 8px; } .p1 { padding-right: 27px; } .p2 { padding-right: 46px; } .p3 { padding-right: 65px; } .p4 { padding-right: 84px; }
.forward { flex: 1; border: 1px solid #8a8a8a; position: relative; padding-top: 1px; font-size: 11.3px; }
.flines { position: absolute; left: 8px; top: 0; width: 40px; height: 40px; }
.fr { height: 18px; display: flex; align-items: center; position: relative; }
.fr span { margin-left: 6px; }
.f0 { padding-left: 8px; }
.f1 { padding-left: 43px; }
.frg { color: #0a8a2a; }
.pathbar { height: 38px; display: flex; align-items: center; padding: 7px 0 0 13px; flex: none; font-size: 11.7px; border-bottom: 1px solid #d8d8d8; }
.pathlbl { width: 47px; }
.pathinput { width: 186px; height: 21px; background: #f3f3f3; padding-left: 2px; line-height: 19px; }
.dd { width: 6px; height: 4px; margin-left: 3px; }
.check { width: 15px; height: 15px; margin-left: 8px; }
.pathcheck { margin-left: 4px; }
.pathpane { flex: 1; background: var(--slate); padding: 6px 0 0 20px; font-size: 11.7px; color: #fff; min-height: 0; }
.found { margin-left: -10px; line-height: 18px; font-size: 12.5px; color: #f2f4f8; }
.pathtitle { margin: 10px 0 0 8px; font-size: 24px; line-height: 32px; color: #97a7c5; font-weight: 300; }
.joins { margin: 4px 0 4px 9px; font-weight: 700; line-height: 16px; color: #b4c6e7; font-size: 11px; }
.tcard { width: 248px; height: 54px; background: #fff; color: #111; padding: 8px 0 0 5px; }
.tcardtop { display: flex; align-items: center; gap: 7px; height: 15px; }
.thin { width: 14px; height: 14px; }
.tcard b { display: block; margin: 5px 0 0 24px; line-height: 18px; font-size: 11px; letter-spacing: -.1px; }
.link { height: 170px; position: relative; padding: 46px 0 0 50px; }
.linkarrow { position: absolute; left: 15px; top: 0; width: 11px; height: 170px; }
.joinbox { width: 475px; height: 78px; background: #e7e7e7; color: #111; display: grid; grid-template-columns: 28px 120px 1fr; grid-auto-rows: 22px; align-items: center; padding: 5px 0 0 7px; position: relative; }
.joinbox b { font-size: 11px; letter-spacing: -.1px; }
.jl { color: #333; font-size: 11.2px; }
.jn { align-self: start; }
.jarrow { width: 12px; height: 17px; margin-left: 5px; }
```
